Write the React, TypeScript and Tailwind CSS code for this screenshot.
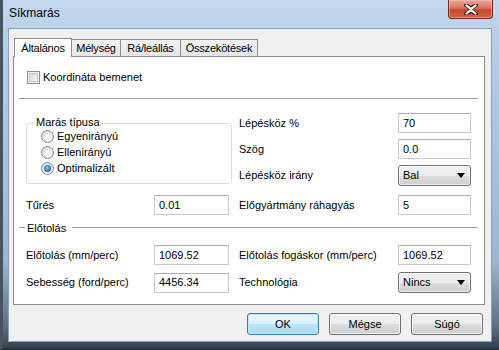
import React from "react";

function TextBox({ value, w = "w-[75px]" }: { value: string; w?: string }) {
  return (
    <div
      className={`${w} h-[20px] bg-white border border-[#c5cad3] border-t-[#abadb3] flex items-center pl-[4px] text-[11px] leading-none`}
    >
      {value}
    </div>
  );
}

function Combo({ value }: { value: string }) {
  return (
    <div className="w-[73px] h-[21px] rounded-[3px] border border-[#707070] bg-[linear-gradient(to_bottom,#f2f2f2_0%,#ebebeb_50%,#dddddd_51%,#cfcfcf_100%)] flex items-center justify-between pl-[4px] pr-[5px] text-[11px] leading-none shadow-[inset_0_0_0_1px_rgba(255,255,255,0.6)]">
      <span>{value}</span>
      <svg width="8" height="5" viewBox="0 0 8 5">
        <path d="M0 0 L8 0 L4 5 Z" fill="#000" />
      </svg>
    </div>
  );
}

function Radio({ checked, label }: { checked?: boolean; label: string }) {
  return (
    <div className="h-[16px] flex items-center gap-[3px]">
      <div className="w-[13px] h-[13px] rounded-full border border-[#8a8a8a] bg-[radial-gradient(circle_at_60%_65%,#fdfdfd_0%,#e2e2e2_60%,#cfcfcf_100%)] flex items-center justify-center">
        {checked && (
          <div className="w-[7px] h-[7px] rounded-full bg-[radial-gradient(circle_at_45%_40%,#8fd0f5_0%,#2a78b8_55%,#143d66_100%)]" />
        )}
      </div>
      <span className="text-[11px] leading-none">{label}</span>
    </div>
  );
}

function Button({ label, def }: { label: string; def?: boolean }) {
  return (
    <div
      className={`w-[72px] h-[22px] rounded-[3px] border flex items-center justify-center text-[11px] leading-none ${
        def
          ? "border-[#3c7fb1] bg-[linear-gradient(to_bottom,#eaf6fd_0%,#d9f0fc_50%,#bee6fd_51%,#a7d9f5_100%)] shadow-[inset_0_0_0_1px_#bfe6fd]"
          : "border-[#707070] bg-[linear-gradient(to_bottom,#f2f2f2_0%,#ebebeb_50%,#dddddd_51%,#cfcfcf_100%)] shadow-[inset_0_0_0_1px_rgba(255,255,255,0.7)]"
      }`}
    >
      {label}
    </div>
  );
}

const tabIdle =
  "h-[17px] border border-l-0 border-b-0 border-[#898c95] bg-[linear-gradient(to_bottom,#f3f3f3,#e5e5e5)] flex items-center justify-center leading-none tracking-[-0.2px]";

export default function App() {
  return (
    <div className="w-[499px] h-[350px] overflow-hidden flex flex-col bg-[linear-gradient(to_bottom,#bcd2e9_0%,#aec7e2_30%,#9db6d0_75%,#5d6e80_94%,#34414e_100%)] border-l-[3px] border-l-[#46545f] border-b-[2px] border-b-[#26313c] font-['Liberation_Sans',Arial,sans-serif] text-black">
      {/* Title bar */}
      <div className="h-[28px] flex items-start justify-between pl-[6px] pr-[6px] shrink-0 bg-[linear-gradient(to_bottom,#c4d8ec,#bcd2e9)]">
        <span className="mt-[7px] text-[12px] leading-none">Síkmarás</span>
        <div className="w-[45px] h-[19px] rounded-b-[4px] border border-t-0 border-[#6e2a1f] bg-[linear-gradient(to_bottom,#e9a99a_0%,#d9735f_45%,#c6452d_55%,#d2633f_100%)] flex items-center justify-center shadow-[inset_0_0_0_1px_rgba(255,200,190,0.5)]">
          <svg width="14" height="11" viewBox="0 0 14 11">
            <path
              d="M2 1 L7 4.5 L12 1 M2 10 L7 6.5 L12 10"
              stroke="#4a1a12"
              strokeWidth="4"
              fill="none"
              strokeLinecap="round"
            />
            <path
              d="M2.5 1.5 L7 5 L11.5 1.5 M2.5 9.5 L7 6 L11.5 9.5 M7 5 L7 6"
              stroke="#ffffff"
              strokeWidth="2.2"
              fill="none"
              strokeLinecap="round"
            />
          </svg>
        </div>
      </div>

      {/* Client area */}
      <div className="flex-1 ml-[5px] mr-[7px] mb-[6px] bg-[#f0f0f0] border border-[#8aa0b6] flex flex-col text-[11px]">
        {/* Tab control */}
        <div className="ml-[4px] mr-[6px] mt-[8px] flex flex-col">
          <div className="flex items-end h-[19px] pl-[1px]">
            <div className="relative z-10 -mb-px w-[58px] h-[19px] bg-white border border-b-0 border-[#898c95] flex items-center justify-center leading-none tracking-[-0.2px]">
              Általános
            </div>
            <div className={`${tabIdle} w-[49px]`}>Mélység</div>
            <div className={`${tabIdle} w-[60px]`}>Rá/leállás</div>
            <div className={`${tabIdle} w-[77px]`}>Összekötések</div>
          </div>
          <div className="h-[249px] bg-white border border-[#898c95] flex flex-col">
            {/* Checkbox */}
            <div className="mt-[14px] ml-[13px] h-[13px] flex items-center gap-[3px]">
              <div className="w-[13px] h-[13px] border border-[#8e8f8f] bg-[#f4f4f4] p-[1px]">
                <div className="w-full h-full border border-[#c8c8c8] bg-[linear-gradient(135deg,#d9d9d9,#f8f8f8)]" />
              </div>
              <span className="leading-none">Koordináta bemenet</span>
            </div>
            <div className="mt-[14px] ml-[5px] mr-[6px] h-[2px] border-t border-[#a0a0a0] border-b border-b-white" />

            {/* Top block */}
            <div className="mt-[13px] ml-[12px] mr-[13px] flex">
              <div className="w-[213px] shrink-0">
                <div className="relative mt-[10px] w-[206px] h-[61px] border border-[#d5dfe5] rounded-[3px] pt-[4px] pl-[14px] flex flex-col">
                  <span className="absolute -top-[7px] left-[8px] bg-white px-[1px] leading-none">
                    Marás típusa
                  </span>
                  <Radio label="Egyenirányú" />
                  <Radio label="Ellenirányú" />
                  <Radio checked label="Optimalizált" />
                </div>
              </div>
              <div className="flex-1 flex flex-col gap-[6px]">
                <div className="flex items-center justify-between">
                  <span>Lépésköz %</span>
                  <TextBox value="70" w="w-[73px]" />
                </div>
                <div className="flex items-center justify-between">
                  <span>Szög</span>
                  <TextBox value="0.0" w="w-[73px]" />
                </div>
                <div className="flex items-center justify-between">
                  <span>Lépésköz irány</span>
                  <Combo value="Bal" />
                </div>
              </div>
            </div>

            {/* Tűrés row */}
            <div className="mt-[9px] ml-[12px] mr-[13px] flex items-center">
              <div className="w-[213px] shrink-0 flex items-center">
                <span className="w-[128px]">Tűrés</span>
                <TextBox value="0.01" />
              </div>
              <div className="flex-1 flex items-center justify-between">
                <span>Előgyártmány ráhagyás</span>
                <TextBox value="5" w="w-[73px]" />
              </div>
            </div>

            {/* Előtolás header */}
            <div className="mt-[6px] ml-[5px] mr-[6px] h-[14px] flex items-center gap-[2px]">
              <div className="w-[6px] h-[2px] border-t border-[#a0a0a0] border-b border-b-white" />
              <span className="leading-none">Előtolás</span>
              <div className="flex-1 ml-[4px] h-[2px] border-t border-[#a0a0a0] border-b border-b-white" />
            </div>

            <div className="mt-[10px] ml-[12px] mr-[13px] flex items-center">
              <div className="w-[213px] shrink-0 flex items-center">
                <span className="w-[128px]">Előtolás (mm/perc)</span>
                <TextBox value="1069.52" />
              </div>
              <div className="flex-1 flex items-center justify-between">
                <span>Előtolás fogáskor (mm/perc)</span>
                <TextBox value="1069.52" w="w-[73px]" />
              </div>
            </div>

            <div className="mt-[7px] ml-[12px] mr-[13px] flex items-center">
              <div className="w-[213px] shrink-0 flex items-center">
                <span className="w-[128px]">Sebesség (ford/perc)</span>
                <TextBox value="4456.34" />
              </div>
              <div className="flex-1 flex items-center justify-between">
                <span>Technológia</span>
                <Combo value="Nincs" />
              </div>
            </div>
          </div>
        </div>

        {/* Buttons */}
        <div className="mt-[8px] mr-[8px] flex justify-end gap-[10px]">
          <Button label="OK" def />
          <Button label="Mégse" />
          <Button label="Súgó" />
        </div>
      </div>
    </div>
  );
}
